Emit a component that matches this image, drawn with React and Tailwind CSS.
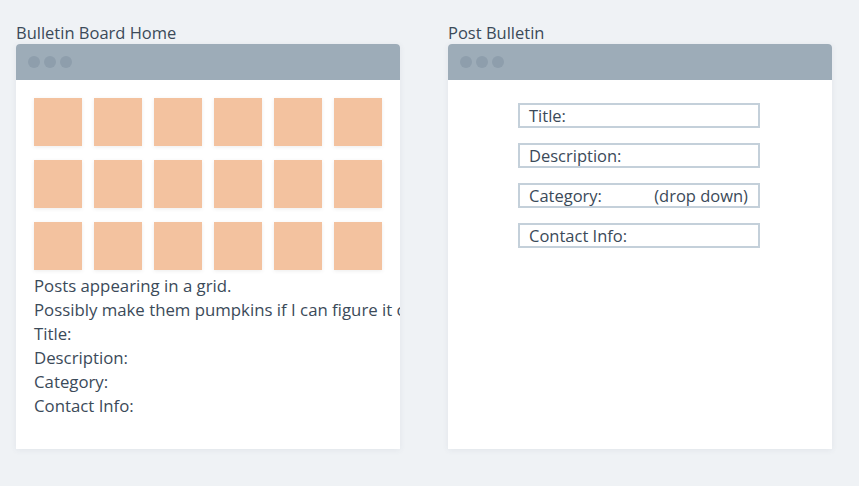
export default function App() {
  const squares = Array.from({ length: 18 });
  const fields = [
    ["Title:", ""],
    ["Description:", ""],
    ["Category:", "(drop down)"],
    ["Contact Info:", ""],
  ];
  const Dots = () => (
    <div className="flex items-center gap-[4px] pl-[12px]">
      <span className="w-[12px] h-[12px] rounded-full bg-[#8e9eac]" />
      <span className="w-[12px] h-[12px] rounded-full bg-[#8e9eac]" />
      <span className="w-[12px] h-[12px] rounded-full bg-[#8e9eac]" />
    </div>
  );
  return (
    <div
      className="w-[859px] h-[486px] bg-[#eff2f5] flex gap-[48px] pl-[16px] pt-[22px] text-[#3b4a59]"
      style={{ fontFamily: '"Open Sans", sans-serif' }}
    >
      <div className="flex flex-col w-[384px]">
        <div className="text-[16.5px] leading-[22px] h-[22px]">Bulletin Board Home</div>
        <div className="h-[405px] bg-white rounded-t-[4px] shadow-[0_1px_6px_rgba(60,80,100,0.08)] overflow-hidden flex flex-col">
          <div className="h-[36px] bg-[#9dacb8] flex items-center">
            <Dots />
          </div>
          <div className="pl-[18px] pt-[18px] flex flex-col">
            <div className="grid grid-cols-[repeat(6,48px)] gap-x-[12px] gap-y-[14px]">
              {squares.map((_, i) => (
                <div key={i} className="w-[48px] h-[48px] bg-[#f3c29f] shadow-[0_1px_4px_rgba(0,0,0,0.08)]" />
              ))}
            </div>
            <div className="mt-[4px] text-[16.8px] leading-[24px] whitespace-nowrap">
              <div>Posts appearing in a grid.</div>
              <div>Possibly make them pumpkins if I can figure it out</div>
              <div>Title:</div>
              <div>Description:</div>
              <div>Category:</div>
              <div>Contact Info:</div>
            </div>
          </div>
        </div>
      </div>
      <div className="flex flex-col w-[384px]">
        <div className="text-[16.5px] leading-[22px] h-[22px]">Post Bulletin</div>
        <div className="h-[405px] bg-white rounded-t-[4px] shadow-[0_1px_6px_rgba(60,80,100,0.08)] overflow-hidden flex flex-col">
          <div className="h-[36px] bg-[#9dacb8] flex items-center">
            <Dots />
          </div>
          <div className="pt-[23px] pl-[70px] flex flex-col gap-[15px]">
            {fields.map(([a, b]) => (
              <div
                key={a}
                className="w-[242px] h-[25px] border-2 border-[#c4d0da] flex items-center justify-between pl-[9px] pr-[10px] text-[16.5px] leading-[20px]"
              >
                <span>{a}</span>
                <span>{b}</span>
              </div>
            ))}
          </div>
        </div>
      </div>
    </div>
  );
}
